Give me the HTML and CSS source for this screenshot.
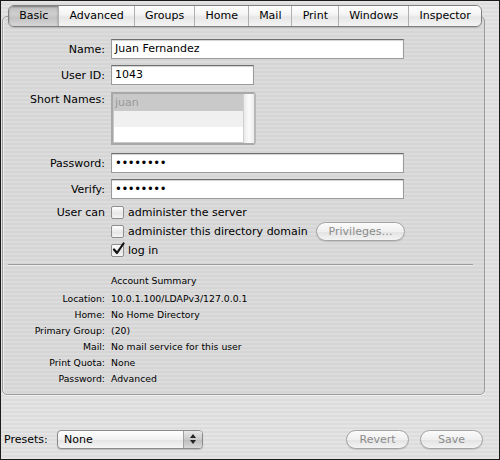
FILE: index.html
```html
<!DOCTYPE html>
<html>
<head>
<meta charset="utf-8">
<link rel="stylesheet" href="styles.css">
</head>
<body>
<div class="window">
  <div class="panel">
    <div class="tabs">
      <div class="tab sel">Basic</div>
      <div class="tab">Advanced</div>
      <div class="tab">Groups</div>
      <div class="tab">Home</div>
      <div class="tab">Mail</div>
      <div class="tab">Print</div>
      <div class="tab">Windows</div>
      <div class="tab">Inspector</div>
    </div>
    <div class="form">
      <div class="row r-name"><div class="lbl">Name:</div><div class="field long">Juan Fernandez</div></div>
      <div class="row r-uid"><div class="lbl">User ID:</div><div class="field short">1043</div></div>
      <div class="row r-list"><div class="lbl top">Short Names:</div>
        <div class="listbox">
          <div class="items">
            <div class="item selitem">juan</div>
            <div class="item alt"></div>
            <div class="item"></div>
          </div>
          <div class="scroll"></div>
        </div>
      </div>
      <div class="row r-pw"><div class="lbl">Password:</div><div class="field long dots">••••••••</div></div>
      <div class="row r-ver"><div class="lbl">Verify:</div><div class="field long dots">••••••••</div></div>
      <div class="row cbrow r-cb1"><div class="lbl">User can</div><span class="cb"></span><span class="cbtext">administer the server</span></div>
      <div class="row cbrow"><div class="lbl"></div><span class="cb"></span><span class="cbtext">administer this directory domain</span><span class="btn priv">Privileges…</span></div>
      <div class="row cbrow"><div class="lbl"></div><span class="cb checked"><svg width="15" height="15" viewBox="0 0 15 15"><path d="M3 7.5 L6 11 L12.5 1.5" fill="none" stroke="#111" stroke-width="2.2" stroke-linecap="round" stroke-linejoin="round"/></svg></span><span class="cbtext">log in</span></div>
    </div>
    <div class="sep"></div>
    <div class="summary">
      <div class="stitle">Account Summary</div>
      <div class="srow first"><div class="slbl">Location:</div><div class="sval">10.0.1.100/LDAPv3/127.0.0.1</div></div>
      <div class="srow"><div class="slbl">Home:</div><div class="sval">No Home Directory</div></div>
      <div class="srow"><div class="slbl">Primary Group:</div><div class="sval">(20)</div></div>
      <div class="srow"><div class="slbl">Mail:</div><div class="sval">No mail service for this user</div></div>
      <div class="srow"><div class="slbl">Print Quota:</div><div class="sval">None</div></div>
      <div class="srow"><div class="slbl">Password:</div><div class="sval">Advanced</div></div>
    </div>
  </div>
  <div class="bottom">
    <div class="plbl">Presets:</div>
    <div class="popup"><span class="ptext">None</span><span class="parrows"><svg width="8" height="12" viewBox="0 0 8 12"><path d="M4 1 L7 5 L1 5 Z M4 11 L7 7 L1 7 Z" fill="#222"/></svg></span></div>
    <span class="btn revert">Revert</span>
    <span class="btn save">Save</span>
  </div>
</div>
</body>
</html>
```
FILE: styles.css
```css
* { box-sizing: border-box; }
html, body { margin: 0; padding: 0; }
body {
  font-family: "DejaVu Sans", "Liberation Sans", sans-serif;
  font-size: 11px;
  color: #000;
  background: #fff;
}
.window {
  width: 500px;
  height: 460px;
  border: 1px solid #1c1c1c;
  background: repeating-linear-gradient(#e4e4e4 0 2px, #dcdcdc 2px 4px);
  display: flex;
  flex-direction: column;
}
.panel {
  margin: 15px 14px 0 1px;
  height: 379px;
  border: 1px solid #9c9c9c;
  border-radius: 5px;
  background: repeating-linear-gradient(#dcdcdc 0 2px, #d5d5d5 2px 4px);
  box-shadow: 0 1px 0 #f2f2f2, inset 1px 0 0 #ececec;
}
.tabs {
  display: flex;
  margin: -12px 0 0 5px;
  height: 22px;
  width: max-content;
  border: 1px solid #7f7f7f;
  border-radius: 6px;
  overflow: hidden;
  box-shadow: 0 1px 1px rgba(0,0,0,0.15);
}
.tab {
  padding: 0 10px 0 10.2px;
  line-height: 20px;
  border-left: 1px solid #b0b0b0;
  background: linear-gradient(#ffffff 0%, #f3f3f3 45%, #e6e6e6 55%, #f4f4f4 100%);
}
.tab:first-child { border-left: none; }
.tab.sel {
  background: linear-gradient(#bdbdbd 0%, #cfcfcf 40%, #c2c2c2 60%, #d6d6d6 100%);
  box-shadow: inset 0 1px 2px rgba(0,0,0,0.35);
}
.form { padding-top: 12px; }
.row { display: flex; align-items: center; }
.lbl {
  width: 102px;
  margin-right: 6px;
  text-align: right;
  flex: none;
}
.lbl.top { align-self: flex-start; margin-top: 1px; }
.field {
  height: 20px;
  background: #fff;
  border: 1px solid #9a9a9a;
  border-top-color: #6e6e6e;
  box-shadow: inset 0 1px 1px rgba(0,0,0,0.18);
  padding: 0 3px;
  line-height: 18px;
  white-space: nowrap;
}
.field.long { width: 293px; }
.field.short { width: 143px; }
.field.dots { letter-spacing: -0.4px; font-size: 11.5px; }
.r-uid { margin-top: 6px; }
.r-list { margin-top: 7px; }
.r-pw { margin-top: 8px; }
.r-ver { margin-top: 6px; }
.listbox {
  width: 145px;
  height: 53px;
  border: 2px solid #a8a8a8;
  border-right-color: #b8b8b8;
  border-radius: 0 3px 3px 0;
  display: flex;
  background: #fff;
  box-shadow: inset 0 0 0 1px #c8c8c8;
}
.items { flex: 1; padding: 1px 0 0 1px; }
.item { height: 16px; line-height: 16px; padding-left: 1px; }
.selitem { background: #c9c9c9; color: #9a9a9a; }
.alt { background: #f0f0f0; }
.scroll {
  width: 11px;
  border-left: 1px solid #cfcfcf;
  background: linear-gradient(90deg, #e9e9e9, #fbfbfb 50%, #ececec);
}
.cbrow { height: 19px; width: 402px; }
.r-cb1 { margin-top: 4px; }
.cb {
  width: 13px;
  height: 13px;
  margin-right: 4px;
  border: 1px solid #8e8e8e;
  border-radius: 2px;
  background: linear-gradient(#ffffff, #e6e6e6 60%, #f6f6f6);
  position: relative;
  flex: none;
}
.cb svg { position: absolute; left: -1px; top: -3px; }
.cbtext { white-space: nowrap; }
.btn {
  display: inline-block;
  height: 19px;
  line-height: 17px;
  text-align: center;
  border: 1px solid #a4a4a4;
  border-radius: 10px;
  background: linear-gradient(#fbfbfb, #efefef 50%, #e3e3e3 52%, #f3f3f3);
  color: #8c8c8c;
  box-shadow: 0 1px 1px rgba(0,0,0,0.12);
}
.priv { width: 89px; margin-left: auto; }
.sep {
  margin: 4px 0 0 5px;
  width: 465px;
  height: 2px;
  border-top: 1px solid #9d9d9d;
  border-bottom: 1px solid #ececec;
}
.summary { font-size: 9.3px; padding-top: 7px; }
.stitle { line-height: 16px; padding-left: 108px; }
.srow { display: flex; line-height: 16px; }
.srow.first { margin-top: 2px; }
.slbl { width: 102px; text-align: right; margin-right: 6px; flex: none; }
.bottom {
  display: flex;
  align-items: center;
  height: 20px;
  margin-top: 34px;
  padding: 0 16px 0 3px;
}
.plbl { width: 53px; }
.popup {
  width: 146px;
  height: 19px;
  border: 1px solid #8a8a8a;
  border-radius: 4px;
  background: linear-gradient(#ffffff, #f1f1f1 50%, #e4e4e4 52%, #f5f5f5);
  display: flex;
  align-items: center;
  box-shadow: 0 1px 1px rgba(0,0,0,0.18);
  overflow: hidden;
}
.ptext { flex: 1; padding-left: 6px; }
.parrows {
  width: 19px;
  height: 100%;
  border-left: 1px solid #a0a0a0;
  background: linear-gradient(#e8e8e8, #c9c9c9 50%, #bcbcbc 52%, #d8d8d8);
  display: flex;
  align-items: center;
  justify-content: center;
}
.revert { width: 63px; margin-left: auto; }
.save { width: 63px; margin-left: 11px; }
```
